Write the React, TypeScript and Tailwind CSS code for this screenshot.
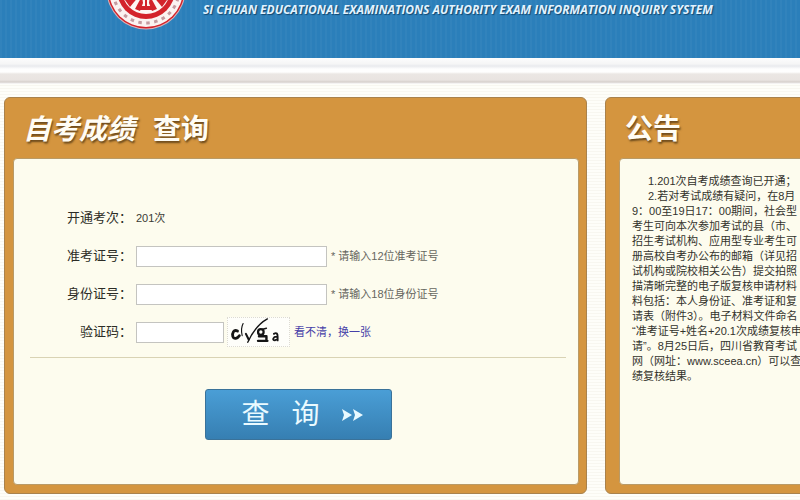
import React, { FC, ReactNode, useState } from "react";

const noticeLines = [
  "9：00至19日17：00期间，社会型",
  "考生可向本次参加考试的县（市、",
  "招生考试机构、应用型专业考生可",
  "册高校自考办公布的邮箱（详见招",
  "试机构或院校相关公告）提交拍照",
  "描清晰完整的电子版复核申请材料",
  "料包括：本人身份证、准考证和复",
  "请表（附件3）。电子材料文件命名",
  "“准考证号+姓名+20.1次成绩复核申",
  "请”。8月25日后，四川省教育考试",
  "网（网址：www.sceea.cn）可以查",
  "绩复核结果。",
];

const Seal: FC = () => (
  <svg width="80" height="80" viewBox="0 0 80 80" className="shrink-0">
    <circle cx="40" cy="40" r="39.5" fill="#d9b3b8" />
    <circle cx="40" cy="40" r="38.5" fill="#d3232b" />
    <circle cx="40" cy="40" r="37" fill="#fbf3f1" />
    <circle
      cx="40"
      cy="40"
      r="33"
      fill="none"
      stroke="#c59ba0"
      strokeWidth="3"
      strokeDasharray="3.500 4.500"
    />
    <circle cx="40" cy="40" r="29" fill="#d3232b" />
    <circle cx="40" cy="40" r="24" fill="#fdf7f4" />
    <g fill="#d3232b">
      <path d="M39 48h2v8h6v4h-14v-4h6z" />
      <path d="M36 46L29 59l5 2 3-8z" />
      <path d="M44 46l7 13-5 2-3-8z" />
      <path d="M33 46L24 57l-5-7z" />
      <path d="M47 46l9 11 5-7z" />
    </g>
  </svg>
);

const Captcha: FC = () => (
  <svg
    width="63"
    height="30"
    viewBox="0 0 63 30"
    className="ml-[3px] border border-dotted border-[#dddbd2] bg-[#fefefa]"
    role="img"
    aria-label="验证码"
  >
    <g fill="none" stroke="#151515" strokeLinecap="round">
      <path d="M9 14C5 12 3 16 4 20c1 3 5 2 7-1" strokeWidth="3" />
      <path d="M15 6c-2 4-2 9-1 13" strokeWidth="1.200" />
      <path d="M18 17l3 6" strokeWidth="2.200" />
      <path d="M20 26C25 15 32 6 41 1" strokeWidth="1.500" />
      <ellipse cx="34" cy="15" rx="3" ry="3" strokeWidth="2.400" />
      <path d="M36 12l4-1" strokeWidth="1.500" />
      <path d="M32 19.500h8M31 24.500h10M40 20v4" strokeWidth="2.600" />
      <path d="M48 17c3-2 4 0 4 3v4M51 20c-4 0-5 4-2 4l2-1" strokeWidth="2" />
    </g>
  </svg>
);

const Panel: FC<{ title: ReactNode; className: string; children: ReactNode }> = ({
  title,
  className,
  children,
}) => (
  <section
    className={`flex shrink-0 flex-col rounded-md border border-[#a9824c] bg-[#d4953f] pb-2 ${className}`}
  >
    <h2 className="flex h-[60px] items-center gap-[18px] pt-1 text-[28px] leading-7 font-bold text-[#fffdf5] [text-shadow:1px_2px_2px_#6b4a1c]">
      {title}
    </h2>
    <div className="min-h-[327px] flex-1 rounded-[4px] border border-[#b99a66] bg-[#fdfcee]">
      {children}
    </div>
  </section>
);

const labelStyle =
  "w-[106px] shrink-0 pr-1 text-right text-[13px] leading-5 whitespace-nowrap text-[#2c2c26]";
const inputStyle =
  "h-[21px] border border-[#c4c4c0] bg-white px-1 text-[11px] outline-none";

const App: FC = () => {
  const [ticket, setTicket] = useState("");
  const [idCard, setIdCard] = useState("");
  const [code, setCode] = useState("");

  return (
    <div className="min-h-screen overflow-hidden bg-[#fefef9] bg-[repeating-linear-gradient(0deg,#f8f7f0_0px,#f8f7f0_1px,transparent_1px,transparent_3px)] font-['Liberation_Sans','Noto_Sans_CJK_SC',sans-serif]">
      <header className="flex h-[58px] items-end overflow-hidden bg-[#2b7fba] bg-[repeating-linear-gradient(90deg,#ffffff08_0px,#ffffff08_2px,transparent_2px,transparent_5px)] pl-[106px]">
        <div className="flex gap-[17px] pb-7">
          <Seal />
          <p className="self-end pb-2.5 font-['Open_Sans'] text-[12px] leading-5 font-bold whitespace-nowrap text-[#e2f3ff] italic [text-shadow:1px_1px_1px_#12476f]">
            SI CHUAN EDUCATIONAL EXAMINATIONS AUTHORITY EXAM INFORMATION INQUIRY
            SYSTEM
          </p>
        </div>
      </header>

      {/* striped bar under the banner */}
      <div className="h-[26px] bg-[linear-gradient(#fdfdfd_0px,#f5f5f6_6px,#e9eaee_8px,#fefefe_11px,#fefefe_14px,#ebe7e4_16px,#e9e4e1_22px,#d6d0cc_24px,#fefefe_26px)]" />

      <main className="flex gap-[18px] px-1 pt-[13px] pb-1.5">
        <Panel
          className="w-[583px] pr-[7px] pl-2"
          title={
            <>
              <span className="pl-2.5 italic">自考成绩</span>
              <span>查询</span>
            </>
          }
        >
          <form
            className="pt-[49px] pr-3 pl-4"
            onSubmit={(e) => e.preventDefault()}
          >
            <div className="flex flex-col gap-[18px]">
              <div className="flex h-5 items-center">
                <span className={labelStyle}>开通考次：</span>
                <span className="text-[11px] text-[#3a3a34]">201次</span>
              </div>
              <div className="flex h-5 items-center">
                <label htmlFor="ticket" className={labelStyle}>
                  准考证号：
                </label>
                <input
                  id="ticket"
                  className={`w-[191px] ${inputStyle}`}
                  value={ticket}
                  onChange={(e) => setTicket(e.target.value)}
                />
                <span className="ml-1 text-[11px] text-[#66665e]">
                  * 请输入12位准考证号
                </span>
              </div>
              <div className="flex h-5 items-center">
                <label htmlFor="idcard" className={labelStyle}>
                  身份证号：
                </label>
                <input
                  id="idcard"
                  className={`w-[191px] ${inputStyle}`}
                  value={idCard}
                  onChange={(e) => setIdCard(e.target.value)}
                />
                <span className="ml-1 text-[11px] text-[#66665e]">
                  * 请输入18位身份证号
                </span>
              </div>
              <div className="flex h-5 items-center">
                <label htmlFor="code" className={labelStyle}>
                  验证码：
                </label>
                <input
                  id="code"
                  className={`w-[88px] ${inputStyle}`}
                  value={code}
                  onChange={(e) => setCode(e.target.value)}
                />
                <Captcha />
                <a href="#" className="ml-1 text-[11px] text-[#4640a8]">
                  看不清，换一张
                </a>
              </div>
            </div>
            <hr className="mt-[15px] border-[#d9d3b4]" />
            <button
              type="submit"
              className="mx-auto mt-[31px] flex h-[51px] w-[187px] items-center justify-center gap-[22px] rounded-[3px] border border-[#3a7299] bg-linear-to-b from-[#4a9ed6] to-[#367fb2] pl-2 text-[28px] leading-7 text-[#eafaff]"
            >
              <span>查</span>
              <span>询</span>
              <svg width="21" height="14" viewBox="0 0 21 14" fill="#eafaff">
                <path d="M0 1l10 6-10 6 2-6z" />
                <path d="M11 1l10 6-10 6 2-6z" />
              </svg>
            </button>
          </form>
        </Panel>

        <Panel
          className="w-[420px] px-[13px]"
          title={<span className="pl-1.5">公告</span>}
        >
          <div className="overflow-hidden px-3 pt-[15px] text-[11px] leading-[15px] whitespace-nowrap text-[#33332c]">
            <p className="pl-4">1.201次自考成绩查询已开通；</p>
            <p className="pl-4">2.若对考试成绩有疑问，在8月</p>
            {noticeLines.map((line) => (
              <p key={line}>{line}</p>
            ))}
          </div>
        </Panel>
      </main>
    </div>
  );
};

export default App;
